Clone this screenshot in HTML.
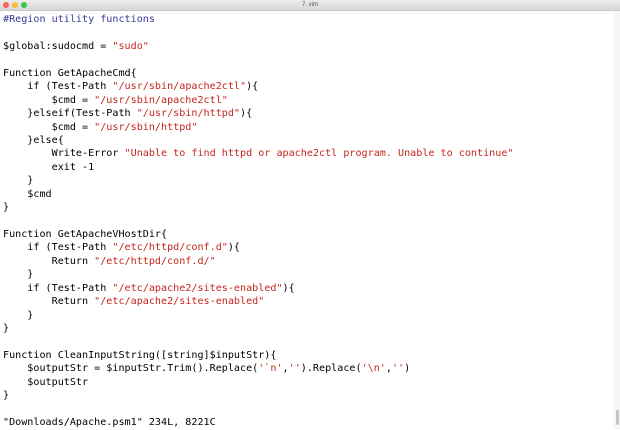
<!DOCTYPE html>
<html><head><style>
html,body{margin:0;padding:0;background:#fff;width:620px;height:429px;overflow:hidden}
.bar{position:absolute;left:0;top:0;width:620px;height:10px;background:linear-gradient(#ececec,#d6d6d6);border-bottom:1px solid #c8c8c8}
.dot{position:absolute;top:2px;width:6px;height:6px;border-radius:50%}
.title{position:absolute;left:0;width:620px;top:0;text-align:center;font:6px "Liberation Sans",sans-serif;color:#555;line-height:10px}
pre{position:absolute;left:3px;top:13px;margin:0;font-family:"DejaVu Sans Mono","Liberation Mono",monospace;font-size:10.1px;line-height:13.43px;color:#000}
.c{color:#3b3b9c}.s{color:#c4271c}
.sb{position:absolute;right:0;top:11px;width:6px;height:418px;background:#f6f6f6}
.th{position:absolute;right:1px;top:410px;width:3px;height:15px;background:#c4c4c4;border-radius:2px}
</style></head><body>
<div class="bar"><div class="dot" style="left:3px;background:#fc605b"></div><div class="dot" style="left:12px;background:#fdbc40"></div><div class="dot" style="left:21px;background:#34c84a"></div><div class="title">7. vim</div></div>
<div class="sb"></div><div class="th"></div>
<pre><span class="c">#Region utility functions</span>

$global:sudocmd = <span class="s">"sudo"</span>

Function GetApacheCmd{
    if (Test-Path <span class="s">"/usr/sbin/apache2ctl"</span>){
        $cmd = <span class="s">"/usr/sbin/apache2ctl"</span>
    }elseif(Test-Path <span class="s">"/usr/sbin/httpd"</span>){
        $cmd = <span class="s">"/usr/sbin/httpd"</span>
    }else{
        Write-Error <span class="s">"Unable to find httpd or apache2ctl program. Unable to continue"</span>
        exit -1
    }
    $cmd
}

Function GetApacheVHostDir{
    if (Test-Path <span class="s">"/etc/httpd/conf.d"</span>){
        Return <span class="s">"/etc/httpd/conf.d/"</span>
    }
    if (Test-Path <span class="s">"/etc/apache2/sites-enabled"</span>){
        Return <span class="s">"/etc/apache2/sites-enabled"</span>
    }
}

Function CleanInputString([string]$inputStr){
    $outputStr = $inputStr.Trim().Replace(<span class="s">'`n'</span>,<span class="s">''</span>).Replace(<span class="s">'\n'</span>,<span class="s">''</span>)
    $outputStr
}

"Downloads/Apache.psm1" 234L, 8221C</pre>
</body></html>
